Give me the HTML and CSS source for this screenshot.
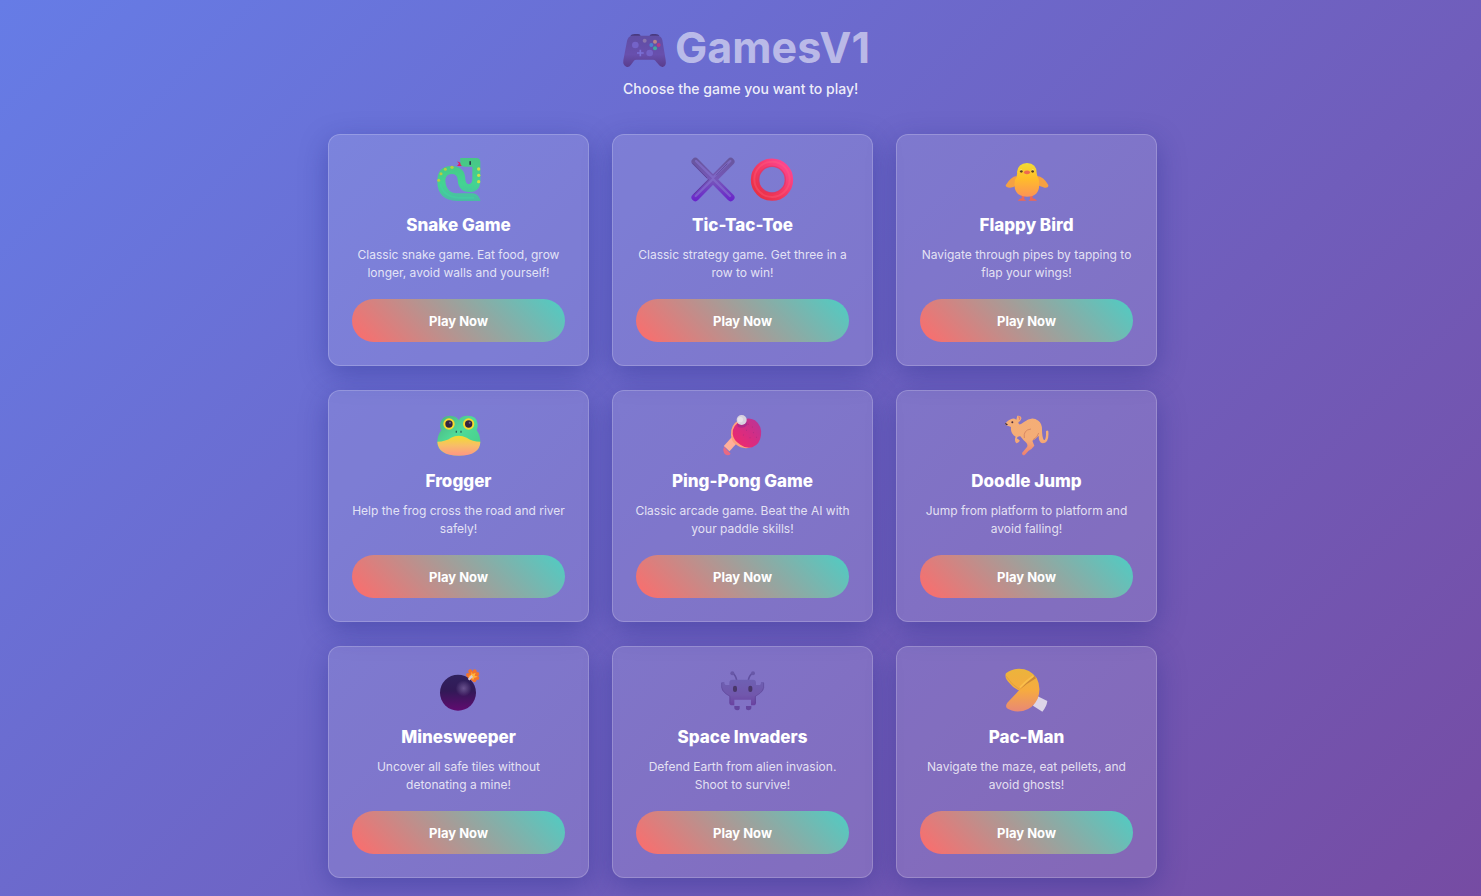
FILE: index.html
```html
<!DOCTYPE html>
<html lang="en">
<head>
<meta charset="utf-8">
<meta name="viewport" content="width=device-width, initial-scale=1">
<title>GamesV1</title>
<link rel="stylesheet" href="styles.css">
</head>
<body>
<div class="page">
<header class="header">
  <h1 class="title">
    <svg class="icon" viewBox="24 12 132 132" aria-hidden="true">
      <defs>
        <linearGradient id="pad" x1="0" y1="0" x2="0" y2="1"><stop offset="0" stop-color="#604ea5"/><stop offset=".6" stop-color="#684fad"/><stop offset="1" stop-color="#5a3d8d"/></linearGradient>
      </defs>
      <path d="M45 37Q49 30 59 30H70Q76 30 77 37ZM103 37Q105 30 112 30H122Q130 30 134 37Z" fill="#493a80"/>
      <path d="M51 35H128Q139 36 142 48L152 108Q155 126 143 129Q136 130 130 121L121 110Q119 107 114 107H64Q59 107 57 110L48 122Q42 131 34 128Q23 124 25 109L36 51Q39 36 51 35Z" fill="url(#pad)"/>
      <circle cx="61" cy="63" r="10" fill="#7463c8"/><circle cx="104" cy="87" r="10" fill="#7463c8"/>
      <circle cx="89" cy="50" r="6" fill="#8a75ae"/>
      <path d="M76 77V97M66 87H86" stroke="#7b70d6" stroke-width="5"/>
      <circle cx="120" cy="53" r="6" fill="#b98685"/><circle cx="131" cy="63" r="6" fill="#b23c88"/><circle cx="109" cy="63" r="6" fill="#4a82cf"/><circle cx="120" cy="73" r="6" fill="#41a99f"/>
    </svg>
    <span>GamesV1</span>
  </h1>
  <p class="subtitle">Choose the game you want to play!</p>
</header>

<main class="games">
  <article class="card">
    <div class="icons">
      <svg class="icon" viewBox="26 24 132 132" aria-hidden="true">
        <defs><linearGradient id="snake" x1="0" y1="0" x2="0" y2="1"><stop offset="0" stop-color="#48c684"/><stop offset=".6" stop-color="#43d492"/><stop offset="1" stop-color="#4abba5"/></linearGradient></defs>
        <path d="M105 42L86 34L92 41L86 48H105Z" fill="#e51c64"/>
        <path d="M96 24H144Q156 24 156 36V92Q156 126 122 126Q90 125 88 89Q87 72 70 72Q51 73 51 92Q53 130 91 130H133Q149 131 156 150V153H86Q27 151 27 94Q27 48 69 48Q110 49 111 87Q112 102 121 103Q132 102 132 88V50H111Q96 50 96 39Z" fill="url(#snake)"/>
        <path d="M36 102Q45 141 91 143H138" fill="none" stroke="#3fd5a1" stroke-width="6" opacity=".5"/>
        <rect x="123" y="33" width="5" height="12" rx="2" fill="#24414b"/>
        <g fill="#b8cb43"><circle cx="31" cy="91" r="4.5"/><circle cx="38" cy="71" r="4.5"/><circle cx="51" cy="58" r="4.5"/><circle cx="71" cy="52" r="5"/></g>
        <g fill="#d0df45"><circle cx="151" cy="57" r="5"/><circle cx="151" cy="76" r="5"/><circle cx="151" cy="95" r="5"/></g>
      </svg>
    </div>
    <h2 class="name">Snake Game</h2>
    <p class="text">Classic snake game. Eat food, grow longer, avoid walls and yourself!</p>
    <button class="play" type="button">Play Now</button>
  </article>

  <article class="card">
    <div class="icons">
      <svg class="icon" viewBox="28 24 132 132" aria-hidden="true">
        <defs><linearGradient id="cross" gradientUnits="userSpaceOnUse" x1="0" y1="24" x2="0" y2="154"><stop offset="0" stop-color="#67569c"/><stop offset=".5" stop-color="#7657b9"/><stop offset="1" stop-color="#6a22cc"/></linearGradient></defs>
        <path d="M41 35L147 142M147 35L41 142" stroke="url(#cross)" stroke-width="23" stroke-linecap="round"/>
        <path d="M43 33L94 83L146 33M42 138L94 87L145 138" fill="none" stroke="#8572cf" stroke-width="7" stroke-linecap="round" stroke-linejoin="round" opacity=".65"/>
        <path d="M33 40L76 84M103 76L137 41M36 133L82 88" fill="none" stroke="#554091" stroke-width="3" opacity=".7"/>
      </svg>
      <svg class="icon" viewBox="204 24 132 132" aria-hidden="true">
        <defs><linearGradient id="ring" x1="1" y1="0" x2="0" y2="1"><stop offset="0" stop-color="#ff4797"/><stop offset=".5" stop-color="#f43a66"/><stop offset="1" stop-color="#e72f40"/></linearGradient></defs>
        <circle cx="270" cy="89" r="51" fill="none" stroke="url(#ring)" stroke-width="25"/>
        <circle cx="270" cy="88" r="53" fill="none" stroke="#ff6581" stroke-width="6" opacity=".35"/>
        <circle cx="270" cy="89" r="40" fill="none" stroke="#da3566" stroke-width="4" opacity=".6"/>
      </svg>
    </div>
    <h2 class="name">Tic-Tac-Toe</h2>
    <p class="text">Classic strategy game. Get three in a row to win!</p>
    <button class="play" type="button">Play Now</button>
  </article>

  <article class="card">
    <div class="icons">
      <svg class="icon" viewBox="26 24 132 132" aria-hidden="true">
        <defs><linearGradient id="chick" x1="0" y1="0" x2="0" y2="1"><stop offset="0" stop-color="#f2dc35"/><stop offset=".45" stop-color="#ffbe29"/><stop offset="1" stop-color="#fc9355"/></linearGradient></defs>
        <path d="M80 134V149M105 134V149" stroke="#e8685d" stroke-width="8"/>
        <path d="M64 152Q69 145 80 145L90 152ZM96 152L105 145Q117 145 122 152Z" fill="#ee6754"/>
        <path d="M61 78Q43 80 28 106Q28 113 41 113Q52 113 61 105ZM122 78Q142 80 156 105Q157 114 145 113L124 106Z" fill="#f5a143"/>
        <path d="M92 39Q121 40 121 69Q122 78 127 88Q136 139 92 140Q47 139 56 89Q64 78 62 66Q65 40 92 39Z" fill="url(#chick)"/>
        <circle cx="75" cy="64" r="4" fill="#573d24"/><circle cx="109" cy="64" r="4" fill="#573d24"/>
        <path d="M71 61Q74 57 78 61M106 61Q110 57 113 61" fill="none" stroke="#fff29a" stroke-width="2"/>
        <path d="M82 67Q87 60 92 62Q97 60 102 67Q100 73 92 73Q84 73 82 67Z" fill="#ed694f"/>
      </svg>
    </div>
    <h2 class="name">Flappy Bird</h2>
    <p class="text">Navigate through pipes by tapping to flap your wings!</p>
    <button class="play" type="button">Play Now</button>
  </article>

  <article class="card">
    <div class="icons">
      <svg class="icon" viewBox="26 28 132 132" aria-hidden="true">
        <defs>
          <linearGradient id="frog" x1="0" y1="0" x2="1" y2="1"><stop offset="0" stop-color="#4dac80"/><stop offset=".45" stop-color="#50dc98"/><stop offset="1" stop-color="#45ca89"/></linearGradient>
          <linearGradient id="belly" x1="0" y1="0" x2="0" y2="1"><stop offset="0" stop-color="#f2dd2f"/><stop offset=".5" stop-color="#f8bd68"/><stop offset="1" stop-color="#ff9585"/></linearGradient>
        </defs>
        <path d="M91 47Q96 33 118 33Q146 33 148 58Q149 69 145 77Q156 92 156 113Q153 152 92 153Q30 152 27 114Q27 91 39 77Q32 66 37 52Q43 33 65 33Q86 34 91 47Z" fill="url(#frog)"/>
        <path d="M27 111Q53 110 68 99Q91 87 115 99Q132 111 156 111Q155 152 92 153Q29 152 27 111Z" fill="url(#belly)"/>
        <circle cx="62" cy="58" r="17" fill="#f7da2e"/><circle cx="121" cy="58" r="17" fill="#f7da2e"/>
        <circle cx="62" cy="58" r="11" fill="#352440"/><circle cx="121" cy="58" r="11" fill="#352440"/>
        <circle cx="65" cy="54" r="3" fill="#74647c"/><circle cx="124" cy="54" r="3" fill="#74647c"/>
        <path d="M84 78V84M98 78V84" stroke="#286457" stroke-width="4"/>
      </svg>
    </div>
    <h2 class="name">Frogger</h2>
    <p class="text">Help the frog cross the road and river safely!</p>
    <button class="play" type="button">Play Now</button>
  </article>

  <article class="card">
    <div class="icons">
      <svg class="icon" viewBox="26 28 132 132" aria-hidden="true">
        <defs><linearGradient id="paddle" x1="1" y1="0" x2="0" y2="1"><stop offset="0" stop-color="#b6369a"/><stop offset=".5" stop-color="#d72c82"/><stop offset="1" stop-color="#f52968"/></linearGradient></defs>
        <path d="M70 102L43 132" stroke="#ffb09a" stroke-width="23"/>
        <path d="M35 126L55 147Q49 156 38 149Q30 139 35 126Z" fill="#e96983"/>
        <path d="M80 45Q53 62 56 91Q58 112 70 119Q92 136 115 128L91 52Z" fill="#ffa17d"/>
        <path d="M90 47Q108 36 128 47Q150 64 146 92Q143 119 120 128Q102 133 84 120Q63 107 61 88Q59 61 90 47Z" fill="url(#paddle)"/>
        <path d="M107 59h2M119 67h2M102 77h2M122 84h2M112 99h2M92 91h2M132 98h2" stroke="#922d78" stroke-width="2"/>
        <path d="M74 57Q94 65 104 48L105 60Q96 73 77 67Z" fill="#8d2a8e" opacity=".5"/>
        <circle cx="88" cy="46" r="15" fill="#d8d2df"/><circle cx="84" cy="45" r="8" fill="#e6e2e8"/>
      </svg>
    </div>
    <h2 class="name">Ping-Pong Game</h2>
    <p class="text">Classic arcade game. Beat the AI with your paddle skills!</p>
    <button class="play" type="button">Play Now</button>
  </article>

  <article class="card">
    <div class="icons">
      <svg class="icon" viewBox="26 28 132 132" aria-hidden="true">
        <defs><linearGradient id="roo" x1="0" y1="0" x2="0" y2="1"><stop offset="0" stop-color="#f4ae76"/><stop offset=".6" stop-color="#f5ad77"/><stop offset="1" stop-color="#ed7f70"/></linearGradient></defs>
        <path d="M45 43Q53 40 60 45L63 33Q76 32 75 42Q72 50 66 53Q66 66 83 52Q106 33 126 48Q137 56 137 74Q137 101 143 106Q150 107 149 80Q153 75 156 80Q159 116 139 116Q127 114 127 93Q118 103 108 108L114 123Q108 132 96 139L86 150Q78 155 77 145L92 127Q97 119 82 107L72 95Q64 94 61 101L70 107Q70 113 60 116Q53 108 58 96Q42 88 44 67L28 61Q24 53 45 43Z" fill="url(#roo)"/>
        <path d="M84 100Q80 76 104 73M110 105Q124 99 127 85" fill="none" stroke="#c9765a" stroke-width="3" opacity=".65"/>
        <circle cx="48" cy="53" r="3" fill="#4b2c3b"/><path d="M26 55Q30 54 35 60L29 62Z" fill="#3e3041"/>
        <path d="M66 37Q72 36 69 45" fill="none" stroke="#dd8370" stroke-width="4"/>
      </svg>
    </div>
    <h2 class="name">Doodle Jump</h2>
    <p class="text">Jump from platform to platform and avoid falling!</p>
    <button class="play" type="button">Play Now</button>
  </article>

  <article class="card">
    <div class="icons">
      <svg class="icon" viewBox="26 31 132 132" aria-hidden="true">
        <defs>
          <linearGradient id="bomb" x1="0" y1="0" x2="0" y2="1"><stop offset="0" stop-color="#30225d"/><stop offset=".45" stop-color="#321957"/><stop offset="1" stop-color="#610b70"/></linearGradient>
          <radialGradient id="shine"><stop offset="0" stop-color="#78609c"/><stop offset="1" stop-color="#78609c" stop-opacity="0"/></radialGradient>
        </defs>
        <g fill="#f2742c"><circle cx="126" cy="35" r="6"/><circle cx="139" cy="35" r="6"/><circle cx="147" cy="43" r="6"/><circle cx="147" cy="55" r="6"/><circle cx="138" cy="62" r="6"/><circle cx="119" cy="46" r="6"/><circle cx="121" cy="55" r="6"/><circle cx="133" cy="49" r="14"/></g>
        <path d="M130 36L133 43L142 39L139 48L149 51L138 54L134 62L129 53L119 50L128 46Z" fill="#ffb33c"/>
        <circle cx="89" cy="99" r="54" fill="url(#bomb)"/><circle cx="106" cy="86" r="24" fill="url(#shine)" opacity=".8"/>
        <path d="M121 60Q125 55 132 49" fill="none" stroke="#d9cbd2" stroke-width="7"/>
      </svg>
    </div>
    <h2 class="name">Minesweeper</h2>
    <p class="text">Uncover all safe tiles without detonating a mine!</p>
    <button class="play" type="button">Play Now</button>
  </article>

  <article class="card">
    <div class="icons">
      <svg class="icon icon-tall" viewBox="26 31 132 132" aria-hidden="true">
        <defs><linearGradient id="alien" x1="0" y1="0" x2="0" y2="1"><stop offset="0" stop-color="#6e60b3"/><stop offset=".6" stop-color="#7157ac"/><stop offset="1" stop-color="#6a41a0"/></linearGradient></defs>
        <path d="M60 41Q69 45 73 61M122 41Q112 45 108 61" fill="none" stroke="#6050a0" stroke-width="5"/>
        <circle cx="60" cy="41" r="6" fill="#6858a8"/><circle cx="122" cy="41" r="6" fill="#6858a8"/>
        <path d="M60 60H122Q131 60 131 69V76H143Q146 75 146 67H155V83Q155 91 149 96L140 104L131 110V129Q131 137 123 137H116V120H66V137H60Q51 137 51 129V110L41 104L33 96Q27 91 27 83V67H36Q36 75 40 76H51V69Q51 60 60 60Z" fill="url(#alien)"/>
        <path d="M66 139H82V147Q81 152 74 152Q66 151 66 146ZM101 139H117V146Q117 151 109 152Q101 151 101 147Z" fill="#64459f"/>
        <path d="M28 70V83Q31 94 39 101L53 110V131M154 70V84Q151 94 143 101L129 110V131" fill="none" stroke="#543e91" stroke-width="2" opacity=".6"/>
        <rect x="62" y="78" width="12" height="19" rx="6" fill="#493769"/><rect x="108" y="78" width="12" height="19" rx="6" fill="#493769"/>
      </svg>
    </div>
    <h2 class="name">Space Invaders</h2>
    <p class="text">Defend Earth from alien invasion. Shoot to survive!</p>
    <button class="play" type="button">Play Now</button>
  </article>

  <article class="card">
    <div class="icons">
      <svg class="icon" viewBox="26 31 132 132" aria-hidden="true">
        <defs><linearGradient id="cookie" x1="0" y1="0" x2="0" y2="1"><stop offset="0" stop-color="#ebb43c"/><stop offset=".5" stop-color="#f6ab3f"/><stop offset="1" stop-color="#e98875"/></linearGradient></defs>
        <path d="M121 108L153 124Q151 141 138 156L110 138Z" fill="#ddd5e8"/>
        <path d="M29 41Q45 28 68 27Q101 27 121 55Q136 84 124 117Q111 145 80 154Q50 159 32 146Q26 139 33 129L68 92Q51 86 39 70Q23 53 29 41Z" fill="url(#cookie)"/>
        <path d="M69 91Q91 67 115 49L119 56Q94 70 69 91Z" fill="#bd7b35" opacity=".7"/>
        <path d="M71 83Q88 65 111 49" fill="none" stroke="#ffca54" stroke-width="5" opacity=".6"/>
        <path d="M30 50Q45 75 69 89" fill="none" stroke="#c68d3d" stroke-width="3" opacity=".4"/>
      </svg>
    </div>
    <h2 class="name">Pac-Man</h2>
    <p class="text">Navigate the maze, eat pellets, and avoid ghosts!</p>
    <button class="play" type="button">Play Now</button>
  </article>
</main>
</div>
</body>
</html>
```
FILE: styles.css
```css
* {
  box-sizing: border-box;
}

body {
  margin: 0;
  min-height: 100vh;
  font-family: Inter, "Liberation Sans", sans-serif;
  color: #fff;
  background: linear-gradient(135deg, #667ce6 0%, #764ba2 100%);
}

.page {
  display: flex;
  flex-direction: column;
  align-items: center;
  padding: 20px 16px 48px 20px;
}

.header {
  padding-left: 8px;
  margin-bottom: 34px;
}

.title {
  display: flex;
  align-items: center;
  gap: 8px;
  margin: 0;
  font-size: 43px;
  line-height: 54px;
  font-weight: 700;
}

.title span {
  color: rgba(255, 255, 255, 0.55);
}

.title .icon {
  margin-top: 6px;
}

.subtitle {
  margin: 4px 0 0;
  font-size: 14px;
  line-height: 22px;
  font-weight: 500;
  color: rgba(255, 255, 255, 0.9);
}

.games {
  display: grid;
  grid-template-columns: repeat(auto-fit, minmax(240px, 1fr));
  gap: 24px 23px;
  width: 100%;
  max-width: 829px;
}

.card {
  display: flex;
  flex-direction: column;
  padding: 23px;
  text-align: center;
  background: rgba(255, 255, 255, 0.12);
  border: 1px solid rgba(255, 255, 255, 0.2);
  border-radius: 12px;
  box-shadow: 0 8px 28px rgba(31, 38, 135, 0.37);
}

.icons {
  display: flex;
  justify-content: center;
  gap: 15px;
}

.icon {
  display: block;
  width: 44px;
  height: 44px;
  overflow: visible;
}

.name {
  margin: 12px 0 10px;
  font-size: 17px;
  line-height: 22px;
  font-weight: 800;
}

.text {
  margin: 0 -4px 17px;
  font-size: 12px;
  line-height: 18px;
  color: rgba(255, 255, 255, 0.8);
}

.play {
  height: 43px;
  margin-top: auto;
  border: 0;
  border-radius: 22px;
  font-family: inherit;
  font-size: 13px;
  font-weight: 700;
  color: #fff;
  background: linear-gradient(45deg, #ff6b6b, #4ecdc4);
  cursor: pointer;
}
```
